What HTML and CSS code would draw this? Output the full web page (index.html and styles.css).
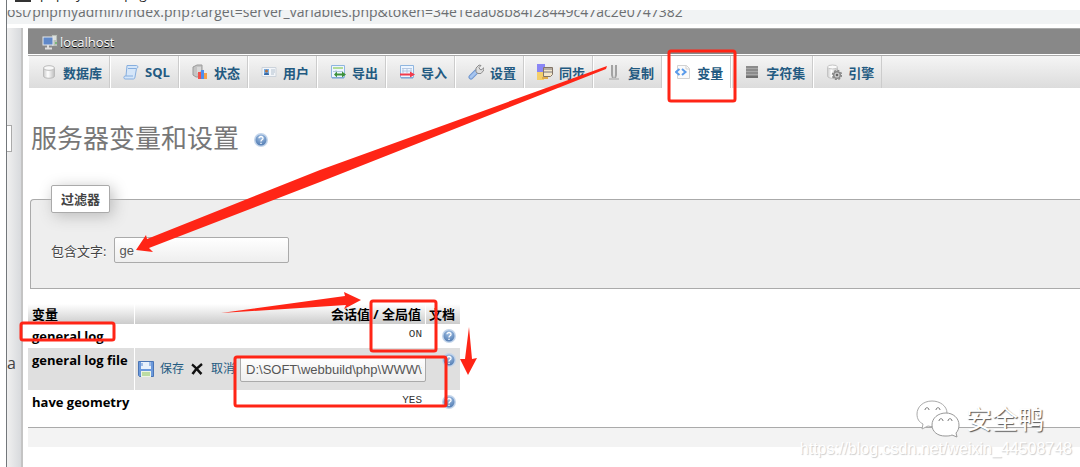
FILE: index.html
```html
<!DOCTYPE html>
<html lang="zh-CN">
<head>
<meta charset="UTF-8">
<meta name="viewport" content="width=device-width, initial-scale=1.0">
<title>localhost | phpMyAdmin</title>
<link rel="stylesheet" href="styles.css">
</head>
<body>
<!-- Shared icon -->
<svg class="sprite" aria-hidden="true">
    <defs>
        <radialGradient id="blue" cx="50%" cy="25%" r="80%">
            <stop offset="0" stop-color="#a3c1e4"/>
            <stop offset="1" stop-color="#4d78b0"/>
        </radialGradient>
        <linearGradient id="metal">
            <stop offset="0" stop-color="#c9c9c9"/>
            <stop offset="0.4" stop-color="#ffffff"/>
            <stop offset="1" stop-color="#bdbdbd"/>
        </linearGradient>
    </defs>
    <symbol id="help" viewBox="0 0 16 16">
        <circle cx="8" cy="8" r="7" fill="#c3d5eb"/>
        <circle cx="8" cy="8" r="5.500" fill="url(#blue)"/>
        <path d="M6 6.300C6 3.900 10.100 3.900 10 6.400C10 7.900 8 7.800 8 9.400M8 10.800V12" fill="none" stroke="#fff" stroke-width="1.300"/>
    </symbol>
</svg>

<div class="window-title"><span class="favicon"></span><span class="window-text">phpmyadmin page</span></div>
<div class="address"><span class="url">ost/phpmyadmin/index.php?target=server_variables.php&amp;token=34e1eaa08b84f28449c47ac2e0747382</span></div>

<div class="layout">
    <div class="sidebar">
        <span class="side-box"></span>
        <span class="side-text">a</span>
    </div>

    <div class="main">
        <div class="serverinfo">
            <svg width="16" height="16" viewBox="0 0 16 16"><path d="M9.500 .500h6v12h-6z" fill="#b9c0b9" stroke="#8a8a8a"/><path d="M11 3h3M11 5h3" stroke="#fff"/><path d="M14 8v2" stroke="#3fae3f"/><rect x="1" y="3" width="10" height="8" fill="#5f88c9" stroke="#e4e7ec"/><path d="M6 11v3M3 14.500h7" stroke="#ddd" stroke-width="2"/></svg>
            <a href="#">localhost</a>
        </div>

        <!-- Top menu -->
        <ul class="topmenu">
            <li><a href="#"><svg viewBox="0 0 16 16"><path d="M2.500 4v8c0 3 11 3 11 0V4" fill="url(#metal)" stroke="#bbb"/><ellipse cx="8" cy="4" rx="5.500" ry="2.300" fill="#f8f8f8" stroke="#bbb"/></svg>数据库</a></li>
            <li><a href="#"><svg viewBox="0 0 16 16"><path d="M4 1.500h9.500c2 0 1.500 3 0 3L12 13c-.3 2-1 2-2 2H2c-1.500 0-1.500-3 0-3h1z" fill="#d5e6f9" stroke="#86aede"/><path d="M5 4.500h8M3 12h7" stroke="#86aede"/></svg>SQL</a></li>
            <li><a href="#"><svg viewBox="0 0 16 16"><path d="M1 3l4-2h5v12H4l-3-2z" fill="#c4c4c4" stroke="#9a9a9a"/><path d="M5 4h4M5 6h4M5 8h3" stroke="#eee"/><path d="M6 8h3v7H6z" fill="#f0524d"/><path d="M9 6h3v9H9z" fill="#4c8df0"/><path d="M12 9h3v6h-3z" fill="#f4a04d"/></svg>状态</a></li>
            <li><a href="#"><svg viewBox="0 0 16 16"><path d="M1 3.500h14v9H1z" fill="#f3f6fa" stroke="#ccd3db"/><path d="M3 5h5v6H3z" fill="#75aee8"/><circle cx="5.500" cy="7" r="1.500" fill="#b5713d"/><path d="M3 11c0-3 5-3 5 0" fill="#386aa7"/><path d="M10 6h4M10 8h4M10 10h3" stroke="#b2c0ce"/></svg>用户</a></li>
            <li><a href="#"><svg viewBox="0 0 16 16"><path d="M1.500 1.500h13v12h-13z" fill="#edf5ff" stroke="#8eb5df"/><path d="M3 4h10" stroke="#b2dc98" stroke-width="2"/><path d="M3 7.500h10M6 6v4" stroke="#b0c6e0"/><path d="M4 10.500l3-3v2h5v-2l4 3-4 3v-2H7v2z" fill="#3d913b"/><path d="M2 14h12" stroke="#719dd0"/></svg>导出</a></li>
            <li><a href="#"><svg viewBox="0 0 16 16"><path d="M1.500 1.500h13v12h-13z" fill="#edf5ff" stroke="#8eb5df"/><path d="M3 4.500h10M4 4v5M8 4v5M12 4v5M3 7h10" stroke="#b5c8e2"/><path d="M1 9.500h10v-2l5 3-5 3v-2H1z" fill="#f23b4c"/><path d="M2 14h12" stroke="#719dd0"/></svg>导入</a></li>
            <li><a href="#"><svg viewBox="0 0 16 16"><path d="M3 13L8 8" stroke="#6f96cf" stroke-width="5" stroke-linecap="round"/><path d="M3 13L8 8" stroke="#a6c5ef" stroke-width="3" stroke-linecap="round"/><path d="M8 8V4l3-3 2 .500-2 2 1 2 2 .200 1.500-2 .500 2.300-3 3.500h-3z" fill="#dedede" stroke="#8d8d8d"/></svg>设置</a></li>
            <li><a href="#"><svg viewBox="0 0 16 16"><path d="M0 0h8v8H0z" fill="#8a86f5"/><path d="M0 8h7v8H0z" fill="#f4cf6a"/><path d="M6.500 3.500h9v7l-2 2h-7z" fill="#f3e7cb" stroke="#837466"/><path d="M7 5h8M7 8h8" stroke="#77757b"/><path d="M5 14h6" stroke="#e0ac4a" stroke-width="2"/></svg>同步</a></li>
            <li><a href="#"><svg viewBox="0 0 16 16"><path d="M6 1v10l1 3M10 1v10l-1 3" fill="none" stroke="#a3a3a3" stroke-width="2"/><path d="M8 2v11" stroke="#ddd"/><path d="M3 15h10" stroke="#c2c2c2" stroke-width="2"/></svg>复制</a></li>
            <li class="active"><a href="#"><svg viewBox="0 0 16 16"><path d="M2.500 1.500h9l3 3v10h-12z" fill="#fafafa" stroke="#d2d2d2"/><path d="M11 1.500V5h3.500" fill="none" stroke="#d2d2d2"/><path d="M4.500 5L1 8l3.500 3M7 5l3.500 3L7 11" fill="none" stroke="#5a9bea" stroke-width="2"/></svg>变量</a></li>
            <li><a href="#"><svg viewBox="0 0 16 16"><path d="M2 2h12v12H2z" fill="#8c8c8c"/><path d="M2 4.500h12M2 7.500h12M2 10.500h12" stroke="#a8a8a8"/><path d="M2 12h12v2H2z" fill="#6f6f6f"/></svg>字符集</a></li>
            <li><a href="#"><svg viewBox="0 0 16 16"><path d="M1.500 3v9c0 3 10 3 10 0V3" fill="url(#metal)" stroke="#c4c4c4"/><ellipse cx="6.500" cy="3" rx="5" ry="2" fill="#fafafa" stroke="#c4c4c4"/><circle cx="11" cy="11" r="3.300" fill="#ccc" stroke="#8a8a8a" stroke-width="1.500"/><circle cx="11" cy="11" r="4.500" fill="none" stroke="#8a8a8a" stroke-width="1.500" stroke-dasharray="2 1.500"/><circle cx="11" cy="11" r="1.300" fill="#666"/></svg>引擎</a></li>
        </ul>

        <h2>服务器变量和设置 <a href="#" aria-label="文档"><svg class="help"><use href="#help"/></svg></a></h2>

        <fieldset>
            <legend>过滤器</legend>
            <label for="filter">包含文字:</label>
            <input type="text" id="filter" value="ge">
        </fieldset>

        <table>
            <thead>
                <tr><th class="name">变量</th><th class="value">会话值 / 全局值</th><th class="doc">文档</th></tr>
            </thead>
            <tbody>
                <tr>
                    <th>general log</th>
                    <td class="value">ON</td>
                    <td class="doc"><a href="#" aria-label="文档"><svg class="help"><use href="#help"/></svg></a></td>
                </tr>
                <tr class="edit">
                    <th>general log file</th>
                    <td>
                        <div class="editor">
                            <a href="#"><svg width="16" height="16" viewBox="0 0 16 16"><path d="M.5.5h15v15h-14l-1-1z" fill="#6b99dc" stroke="#4a75b5"/><path d="M3 1h10v7H3z" fill="#e9f1fb"/><path d="M4 2v3M12 1v4" stroke="#5788cf"/><path d="M3 10h10v6H3z" fill="#eef5e6"/><path d="M4 12h8M4 14h8" stroke="#8bc35e"/></svg>保存</a>
                            <a href="#"><svg width="16" height="16" viewBox="0 0 16 16"><path d="M3 3.500c3 2 6 6 9.500 9.500M13 3C9 6 6 9 3.500 13" fill="none" stroke="#111" stroke-width="2.500"/></svg>取消</a>
                            <input type="text" aria-label="general log file" value="D:\SOFT\webbuild\php\WWW\x">
                        </div>
                    </td>
                    <td class="doc"><a href="#" aria-label="文档"><svg class="help"><use href="#help"/></svg></a></td>
                </tr>
                <tr class="last">
                    <th>have geometry</th>
                    <td class="value">YES</td>
                    <td class="doc"><a href="#" aria-label="文档"><svg class="help"><use href="#help"/></svg></a></td>
                </tr>
            </tbody>
        </table>
        <div class="footer"></div>
    </div>
</div>

<!-- Marks drawn over the page -->
<svg class="marks" width="760" height="420" aria-hidden="true">
    <g fill="none" stroke="#ff2516" stroke-width="3">
        <rect x="669" y="51" width="66" height="50" rx="2"/>
        <rect x="21" y="323" width="93" height="17" rx="2"/>
        <rect x="371" y="301" width="65" height="50" rx="2"/>
        <rect x="235" y="357" width="211" height="49" rx="2"/>
    </g>
    <g fill="#ff2516">
        <path d="M607 66L606 69L320 182L149 248L153 252L136 250L146 235L147 239L320 170Z"/>
        <path d="M221 313L345 296L344 292L361 300L344 309L346 305Z"/>
        <path d="M469 327L472 359L477 358L468 375L460 359L465 359Z"/>
    </g>
</svg>

<div class="wechat">
    <svg width="44" height="38" viewBox="0 0 44 38"><path d="M16 1C7 1 1 7 1 14c0 5 2 8 6 10l-1 5 6-3c4 1 7 1 11-1 5-2 8-7 8-12C31 6 24 1 16 1z" fill="#fff" stroke="#aaa"/><path d="M30 13c-8 0-14 5-14 12s6 11 13 11c3 0 5 0 7-1l5 2-1-4c2-2 3-5 3-8 0-7-6-12-13-12z" fill="#fff" stroke="#999"/><path d="M9 10c0-3 4-3 4 0M20 10c0-3 4-3 4 0M23 21c0-3 4-3 4 0M32 21c0-3 4-3 4 0" fill="none" stroke="#777"/></svg>
    <span>安全鸭</span>
</div>
<div class="watermark">https://blog.csdn.net/weixin_44508748</div>
</body>
</html>
```

FILE: styles.css
```css
* {
    box-sizing: border-box;
}

body {
    margin: 0;
    min-height: 100vh;
    position: relative;
    display: flex;
    flex-direction: column;
    overflow: hidden;
    background: #fff;
    font-family: "Open Sans", "Noto Sans CJK SC", sans-serif;
    font-size: 13px;
    color: #444;
}

a {
    color: #235a81;
    text-decoration: none;
}

.sprite {
    position: absolute;
    width: 0;
    height: 0;
}

/* Browser window */
.window-title,
.address {
    display: flex;
    align-items: flex-end;
    margin-left: 6px;
    border-left: 1px solid #73777b;
    overflow: hidden;
    white-space: nowrap;
}

.window-title {
    height: 10px;
    padding: 0 8px 8px;
    gap: 9px;
    color: #222;
}

.window-text {
    line-height: 16px;
}

.favicon {
    width: 16px;
    height: 16px;
    background: #333;
}

.address {
    height: 14px;
    background: #f1f3f4;
    font-size: 14px;
    line-height: 24px;
    color: #6b6e71;
}

.layout {
    flex: 1;
    display: flex;
    margin-left: 6px;
    padding-top: 4px;
    border-left: 1px solid #73777b;
}

.sidebar {
    width: 16px;
    flex: none;
    background: linear-gradient(to right, #f0f0f0, #d8dadd);
    border-right: 2px solid #c4c4c4;
    overflow: hidden;
}

.side-box {
    display: block;
    width: 5px;
    height: 27px;
    margin-top: 97px;
    border: 1px solid #aaa;
    border-left: 0;
    background: #fff;
}

.side-text {
    display: block;
    margin-top: 200px;
    font-size: 16px;
    line-height: 22px;
}

.main {
    flex: 1;
    min-width: 0;
    padding-left: 5px;
}

.serverinfo {
    display: flex;
    align-items: center;
    gap: 2px;
    height: 26px;
    padding: 0 14px;
    background: #888;
    border-top: 1px solid #a9a9a9;
}

.serverinfo a {
    color: #fff;
    text-shadow: 0 1px 0 #000;
}

/* Top menu */
.topmenu {
    display: flex;
    height: 33px;
    margin: 1px 0 0;
    padding: 0;
    list-style: none;
    border-top: 1px solid #aaa;
    background: linear-gradient(#f5f5f5, #dcdcdc);
}

.topmenu li {
    min-width: 69px;
    border-right: 1px solid #ccc;
    border-left: 1px solid #fff;
}

.topmenu .active {
    background: #fff;
}

.topmenu a {
    display: flex;
    align-items: center;
    gap: 6px;
    height: 32px;
    padding: 0 7px 0 12px;
    font-weight: bold;
    white-space: nowrap;
}

.topmenu svg {
    width: 16px;
    height: 16px;
    flex: none;
}

h2 {
    display: flex;
    align-items: center;
    gap: 14px;
    margin: 30px 0 0 3px;
    font-size: 26px;
    line-height: 40px;
    font-weight: normal;
    color: #777;
}

h2 a {
    display: flex;
    padding-top: 4px;
}

.help {
    width: 16px;
    height: 16px;
    display: block;
}

/* Filter box */
fieldset {
    display: flex;
    align-items: center;
    gap: 8px;
    margin: 27px 0 0 2px;
    padding: 24px 20px 25px;
    border: 1px solid #aaa;
    border-right: 0;
    border-radius: 4px 0 0 0;
    background: #eee;
    text-shadow: 0 1px 0 #fff;
}

legend {
    padding: 0 9px;
    border: 1px solid #aaa;
    border-radius: 2px;
    background: #fff;
    box-shadow: 3px 3px 15px #bbb;
    font-weight: bold;
    line-height: 26px;
}

input {
    border: 1px solid #aaa;
    border-radius: 2px;
    background: linear-gradient(#fff, #eee);
    font-family: "Liberation Sans", sans-serif;
    font-size: 13px;
    color: #555;
}

#filter {
    width: 175px;
    height: 26px;
    padding: 0 4px;
}

/* Variables */
table {
    width: 432px;
    margin-top: 15px;
    table-layout: fixed;
    border-collapse: separate;
    border-spacing: 0;
    color: #000;
}

th,
td {
    height: 24px;
    padding: 2px 4px;
    line-height: 20px;
    text-align: left;
    vertical-align: top;
    white-space: nowrap;
}

thead th {
    height: 20px;
    padding: 0 4px;
    border-right: 1px solid #fff;
    background: linear-gradient(#fff, #ccc);
}

.name {
    width: 107px;
}

thead .doc {
    width: 34px;
    padding: 0 3px;
    border-right: 0;
}

th.value,
td.value {
    text-align: right;
}

td.value {
    padding-top: 0;
    font-family: "Liberation Mono", monospace;
    font-size: 11px;
    color: #333;
}

td.doc {
    padding: 4px 3px;
}

td .help {
    margin-left: auto;
}

.edit th,
.edit td {
    height: 42px;
    background: #dfdfdf;
}

.edit th {
    border-right: 1px solid #fff;
}

.edit td {
    padding-left: 3px;
}

.last th,
.last td {
    height: 37px;
}

.editor {
    display: flex;
    align-items: center;
    gap: 5px;
    height: 38px;
}

.editor a {
    display: flex;
    align-items: center;
    gap: 6px;
    font-size: 12px;
}

.editor input {
    width: 188px;
    height: 26px;
    padding: 0 3px 0 5px;
}

.footer {
    height: 20px;
    border-top: 1px solid #aaa;
    background: #f3f3f3;
}

/* Overlays */
.marks {
    position: absolute;
    top: 0;
    left: 0;
}

.wechat {
    position: absolute;
    right: 36px;
    bottom: 29px;
    display: flex;
    align-items: center;
    gap: 6px;
    font-size: 26px;
    line-height: 38px;
    color: #fff;
    text-shadow: 1px 1px 1px #555;
}

.watermark {
    position: absolute;
    right: 8px;
    bottom: 8px;
    font-family: "Liberation Sans", sans-serif;
    font-size: 16px;
    line-height: 20px;
    color: #fff;
    text-shadow: 1px 1px 1px #ccc;
}
```
